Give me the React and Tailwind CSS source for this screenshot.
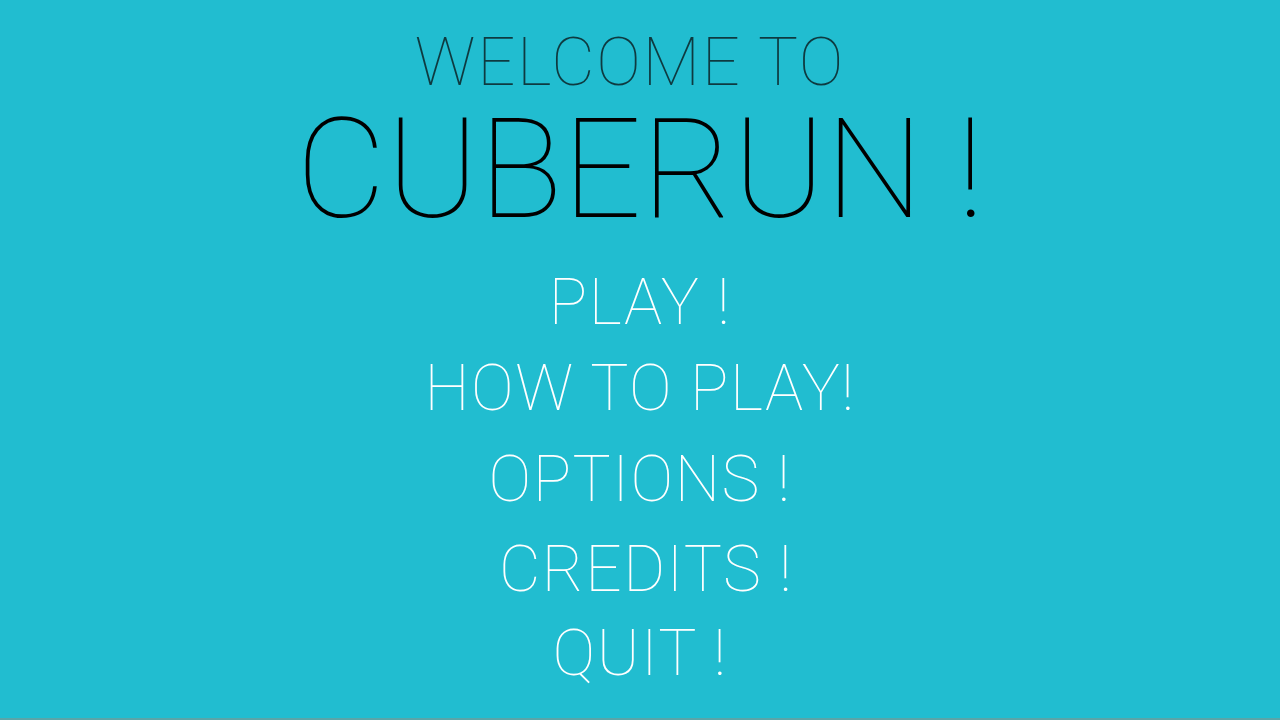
import React from "react";

const menu = [
  { label: "PLAY !", h: "h-[85px]", pad: "" },
  { label: "HOW TO PLAY!", h: "h-[90px]", pad: "" },
  { label: "OPTIONS !", h: "h-[92px]", pad: "" },
  { label: "CREDITS !", h: "h-[84px]", pad: "pl-[12px]" },
  { label: "QUIT !", h: "h-[88px]", pad: "" },
];

const App = () => {
  return (
    <div
      className="w-[1280px] h-[720px] bg-[#21bdd0] border-b-2 border-[#5aa5a8] overflow-hidden flex flex-col items-center pt-[22px]"
      style={{ fontFamily: "Roboto, 'Noto Sans', sans-serif" }}
    >
      <h2 className="h-[80px] leading-[80px] text-[67px] font-thin tracking-[1.7px] text-[#0e3a40] pr-[20px]">
        WELCOME TO
      </h2>
      <h1 className="h-[135px] leading-[135px] text-[139px] font-thin text-black">
        CUBERUN !
      </h1>
      <nav className="flex flex-col items-center mt-[22px]">
        {menu.map((m) => (
          <button
            key={m.label}
            className={`${m.h} ${m.pad} leading-[88px] text-[64px] font-thin tracking-[1.5px] text-white`}
          >
            {m.label}
          </button>
        ))}
      </nav>
    </div>
  );
};

export default App;
